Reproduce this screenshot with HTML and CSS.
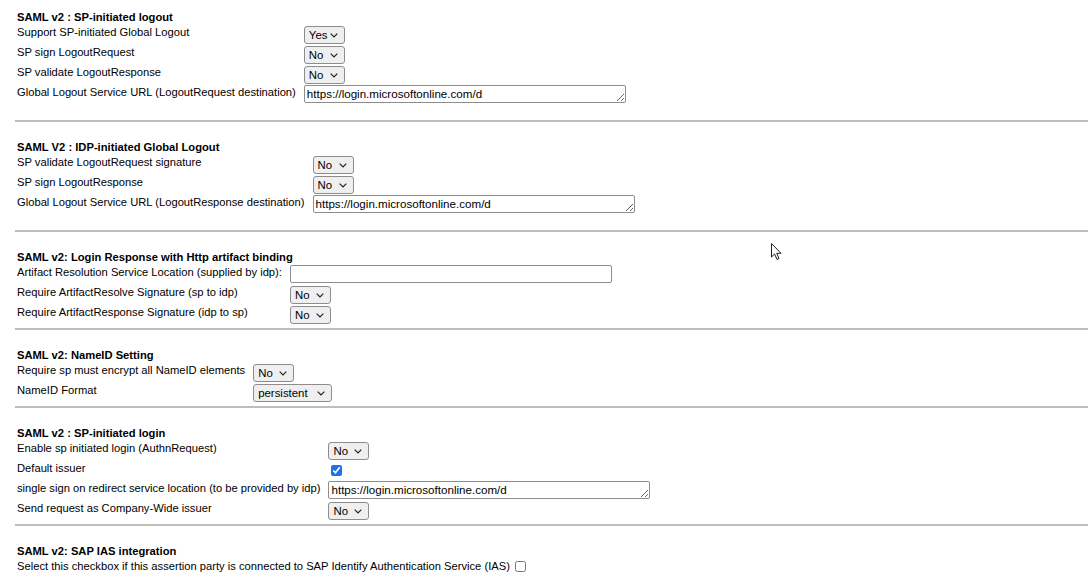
FILE: index.html
```html
<!DOCTYPE html>
<html lang="en">
<head>
    <meta charset="UTF-8">
    <meta name="viewport" content="width=device-width, initial-scale=1.0">
    <link rel="stylesheet" href="styles.css">
    <title>SAML v2 settings</title>
</head>
<body>
<div class="page">

    <div class="block block-loose">
        <div class="title">SAML v2 : SP-initiated logout</div>
        <table class="form">
            <tr><td class="lbl">Support SP-initiated Global Logout</td><td><select class="sel"><option>Yes</option><option>No</option></select></td></tr>
            <tr><td class="lbl">SP sign LogoutRequest</td><td><select class="sel"><option>No</option><option>Yes</option></select></td></tr>
            <tr><td class="lbl">SP validate LogoutResponse</td><td><select class="sel"><option>No</option><option>Yes</option></select></td></tr>
            <tr><td class="lbl">Global Logout Service URL (LogoutRequest destination)</td><td><textarea class="url" rows="1">https://login.microsoftonline.com/d</textarea></td></tr>
        </table>
    </div>
    <hr class="sep">

    <div class="block block-loose">
        <div class="title">SAML V2 : IDP-initiated Global Logout</div>
        <table class="form">
            <tr><td class="lbl">SP validate LogoutRequest signature</td><td><select class="sel"><option>No</option><option>Yes</option></select></td></tr>
            <tr><td class="lbl">SP sign LogoutResponse</td><td><select class="sel"><option>No</option><option>Yes</option></select></td></tr>
            <tr><td class="lbl">Global Logout Service URL (LogoutResponse destination)</td><td><textarea class="url" rows="1">https://login.microsoftonline.com/d</textarea></td></tr>
        </table>
    </div>
    <hr class="sep">

    <div class="block">
        <div class="title">SAML v2: Login Response with Http artifact binding</div>
        <table class="form">
            <tr><td class="lbl">Artifact Resolution Service Location (supplied by idp):</td><td><input class="txt" type="text"></td></tr>
            <tr><td class="lbl">Require ArtifactResolve Signature (sp to idp)</td><td><select class="sel"><option>No</option><option>Yes</option></select></td></tr>
            <tr><td class="lbl">Require ArtifactResponse Signature (idp to sp)</td><td><select class="sel"><option>No</option><option>Yes</option></select></td></tr>
        </table>
    </div>
    <hr class="sep">

    <div class="block">
        <div class="title">SAML v2: NameID Setting</div>
        <table class="form">
            <tr><td class="lbl">Require sp must encrypt all NameID elements</td><td><select class="sel"><option>No</option><option>Yes</option></select></td></tr>
            <tr><td class="lbl">NameID Format</td><td><select class="sel sel-wide"><option>persistent</option><option>transient</option><option>unspecified</option></select></td></tr>
        </table>
    </div>
    <hr class="sep">

    <div class="block">
        <div class="title">SAML v2 : SP-initiated login</div>
        <table class="form">
            <tr><td class="lbl">Enable sp initiated login (AuthnRequest)</td><td><select class="sel"><option>No</option><option>Yes</option></select></td></tr>
            <tr><td class="lbl">Default issuer</td><td><input class="chk" type="checkbox" checked></td></tr>
            <tr><td class="lbl">single sign on redirect service location (to be provided by idp)</td><td><textarea class="url" rows="1">https://login.microsoftonline.com/d</textarea></td></tr>
            <tr><td class="lbl">Send request as Company-Wide issuer</td><td><select class="sel"><option>No</option><option>Yes</option></select></td></tr>
        </table>
    </div>
    <hr class="sep">

    <div class="block">
        <div class="title">SAML v2: SAP IAS integration</div>
        <div class="line">Select this checkbox if this assertion party is connected to SAP Identify Authentication Service (IAS) <input class="chk" type="checkbox"></div>
    </div>

    <!-- mouse pointer from the capture -->
    <svg class="pointer" width="12" height="18" viewBox="0 0 12 18"><path d="M0.5 0.5 L0.5 14 L3.6 11 L6 16.5 L8 15.6 L5.7 10.3 L10 10.3 Z" fill="#fff" stroke="#222" stroke-width="1"/></svg>
</div>
</body>
</html>
```

FILE: styles.css
```css
body{margin: 0;background: #fff;color: #000;font-family: "Liberation Sans", Arial, sans-serif;font-size: 11.2px;}
.page{position: relative;padding: 9px 0 0 17px;}

.title{font-weight: bold;line-height: 16px;}
.block{margin-bottom: 3px;}
.block-loose{margin-bottom: 15px;}
.sep{height: 0;border: 0;border-top: 2px solid #bdbdbd;margin: 0 0 17px -2px;}

.form{border-collapse: collapse;border-spacing: 0;}
.form td{padding: 0;height: 20px;vertical-align: top;}
.form td.lbl{padding-right: 8px;line-height: 14px;}
.line{line-height: 14px;}

.sel{-webkit-appearance: none;appearance: none;display: block;box-sizing: border-box;width: 41px;height: 18px;margin-top: 1px;padding: 0 0 0 4px;
    font: 11.4px "Liberation Sans", Arial, sans-serif;color: #000;
    background: #efefef url("data:image/svg+xml;utf8,<svg xmlns='http://www.w3.org/2000/svg' width='8' height='5' viewBox='0 0 8 5'><path d='M0.7 0.7 L4 4 L7.3 0.7' fill='none' stroke='%23222' stroke-width='1.2'/></svg>") no-repeat right 6px center;
    border: 1px solid #8d8d8d;border-radius: 3px;}
.sel-wide{width: 79px;}

.url,.txt{display: block;box-sizing: border-box;width: 322px;height: 18px;margin: 0;padding: 0 2px;
    font: 11.6px "Liberation Sans", Arial, sans-serif;line-height: 16px;color: #000;background: #fff;
    border: 1px solid #8d8d8d;border-radius: 2px;overflow: hidden;}
.url{resize: both;white-space: nowrap;}

.chk{display: block;width: 11px;height: 11px;margin: 4px 0 0 3px;accent-color: #1a73e8;}
.line .chk{display: inline-block;margin: 0 0 0 2px;vertical-align: -2px;}

.pointer{position: absolute;left: 771px;top: 243px;}
```
